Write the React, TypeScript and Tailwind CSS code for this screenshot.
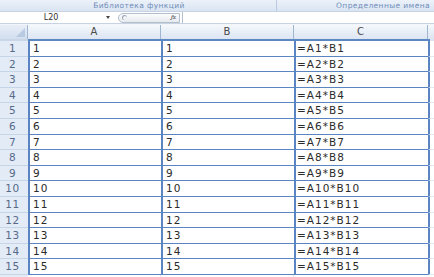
const rows = Array.from({ length: 15 }, (_, i) => i + 1)

const cellFont = { fontFamily: '"DejaVu Sans", Verdana, sans-serif' }

export default function App() {
  return (
    <div className="h-[277px] w-[434px] overflow-hidden bg-white" style={cellFont}>
      {/* ribbon group labels */}
      <div className="flex h-[11px] bg-gradient-to-b from-[#edf2f9] to-[#d9e4f2] text-[7.5px] leading-[11px] tracking-[0.4px] text-[#6f8db8]">
        <div className="flex w-[277px] items-center justify-center border-r border-[#b9cbe2] pl-[2px]">
          Библиотека функций
        </div>
        <div className="flex flex-1 items-center justify-end pr-[4px]">
          Определенные имена
        </div>
      </div>

      {/* formula bar */}
      <div className="flex h-[13px] items-stretch border-t border-b border-[#c7d3e3] bg-white text-[8px] text-[#333]">
        <div className="relative flex w-[112px] items-center justify-center pr-[10px]">
          L20
          <span className="absolute right-[2px] top-[4px] h-0 w-0 border-x-[2.5px] border-t-[3px] border-x-transparent border-t-[#444]" />
        </div>
        <div className="flex w-[70px] items-center pl-[6px] pr-[2px]">
          <div className="flex h-[10px] flex-1 items-center justify-end rounded-l-full border border-[#b4bfcc] bg-gradient-to-b from-[#fbfcfd] to-[#e6eaef] pr-[3px]">
            <span className="mr-auto ml-[3px] h-[5px] w-[5px] rounded-full border-l border-t border-[#9aa6b4]" />
            <span className="font-serif text-[7px] italic text-[#444]">fx</span>
          </div>
        </div>
        <div className="flex-1 border-l border-[#b4bfcc] bg-white" />
      </div>

      <div className="h-[1px] bg-[#f2f5f9]" />

      {/* column headers */}
      <div className="flex h-[14px] bg-gradient-to-b from-[#f5f8fc] to-[#dbe5f2] text-[10px] leading-[14px] text-[#4a4a4a]">
        <div className="relative w-[28px] border-r border-[#9fb6d1] bg-gradient-to-b from-[#e8eef7] to-[#d2deee]">
          <span className="absolute bottom-[2px] right-[2px] h-0 w-0 border-b-[9px] border-l-[9px] border-b-[#b7cae2] border-l-transparent" />
        </div>
        <div className="w-[133px] border-r border-[#9fb6d1] text-center">A</div>
        <div className="w-[133px] border-r border-[#9fb6d1] text-center">B</div>
        <div className="w-[134px] border-r border-[#9fb6d1] text-center">C</div>
        <div className="flex-1" />
      </div>

      {/* grid rows */}
      <div className="flex h-[2px]">
        <div className="w-[28px] bg-[#c9d6e8]" />
        <div className="w-[402px] bg-[#5d87c3]" />
        <div className="flex-1 bg-[#dde4ee]" />
      </div>
      {rows.map((n) => (
        <div
          key={n}
          className="flex h-[15.6px] text-[10.5px] leading-[14px] tracking-[1px] text-[#2b2b2b]"
        >
          <div className="w-[28px] border-b border-[#c6d5e8] bg-[#e3ebf6] pr-[3px] text-center tracking-[0.5px] text-[#566a8a]">
            {n}
          </div>
          <div className="w-[133px] border-b-[1.5px] border-l-2 border-[#5a84c2] pl-[3px]">{n}</div>
          <div className="w-[133px] border-b-[1.5px] border-l-2 border-[#5a84c2] pl-[3px]">{n}</div>
          <div className="w-[134px] border-b-[1.5px] border-l-2 border-[#5a84c2] pl-[1px]">
            =A{n}*B{n}
          </div>
          <div className="flex-1 border-b border-l-2 border-b-[#e3e9f1] border-l-[#5a84c2]" />
        </div>
      ))}
      <div className="flex h-[6px]">
        <div className="w-[28px] bg-[#e3ebf6]" />
        <div className="w-[133px] border-r border-[#dfe6f0]" />
        <div className="w-[133px] border-r border-[#dfe6f0]" />
        <div className="flex-1" />
      </div>
    </div>
  )
}
